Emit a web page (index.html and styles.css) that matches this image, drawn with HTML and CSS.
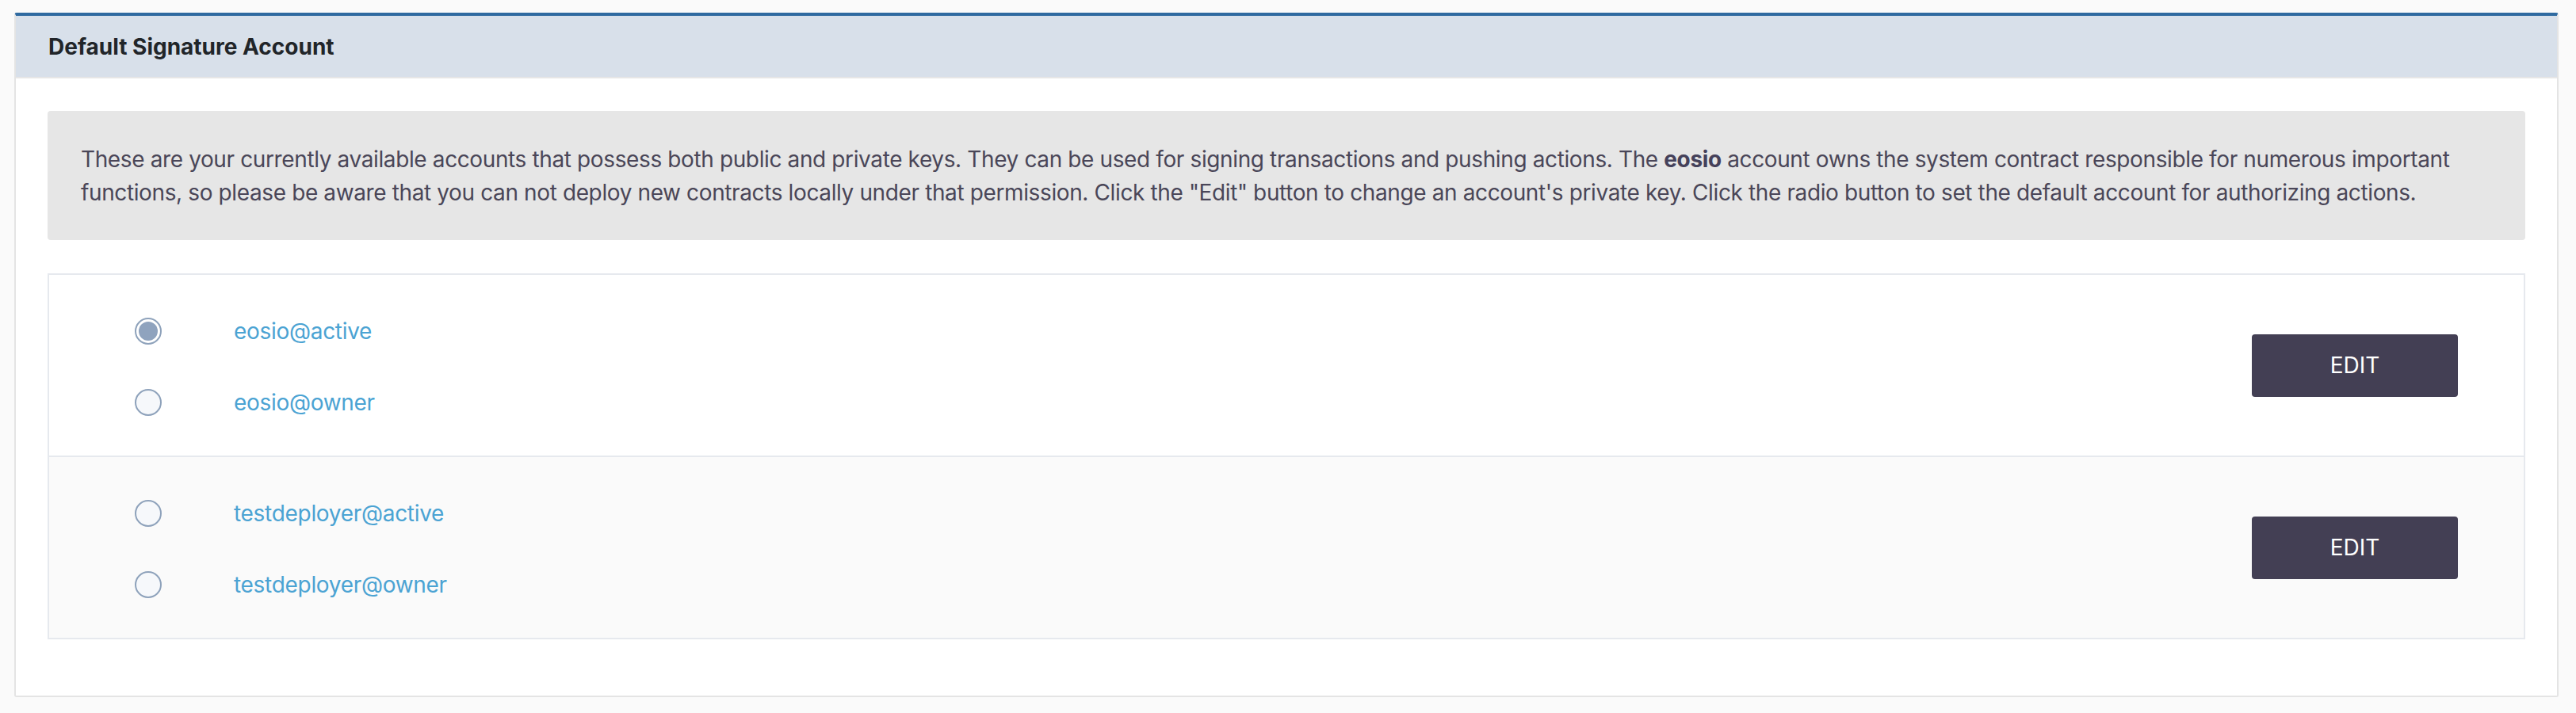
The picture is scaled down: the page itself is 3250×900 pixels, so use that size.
FILE: index.html
```html
<!DOCTYPE html>
<html lang="en">
<head>
<meta charset="utf-8">
<title>Default Signature Account</title>
<link rel="stylesheet" href="styles.css">
</head>
<body>
  <section class="card">
    <header class="card-header">Default Signature Account</header>
    <div class="card-body">
      <div class="info">
        These are your currently available accounts that possess both public and private keys. They can be used for signing transactions and pushing actions. The <b>eosio</b> account owns the system contract responsible for numerous important functions, so please be aware that you can not deploy new contracts locally under that permission. Click the "Edit" button to change an account's private key. Click the radio button to set the default account for authorizing actions.
      </div>
      <div class="accounts">
        <div class="account-row">
          <div class="options">
            <label class="option"><span class="radio checked"></span><span class="name">eosio@active</span></label>
            <label class="option"><span class="radio"></span><span class="name">eosio@owner</span></label>
          </div>
          <button class="edit-btn">EDIT</button>
        </div>
        <div class="account-row alt">
          <div class="options">
            <label class="option"><span class="radio"></span><span class="name">testdeployer@active</span></label>
            <label class="option"><span class="radio"></span><span class="name">testdeployer@owner</span></label>
          </div>
          <button class="edit-btn">EDIT</button>
        </div>
      </div>
    </div>
  </section>
</body>
</html>
```
FILE: styles.css
```css
html, body {
  margin: 0;
  background: #fafafa;
}
body {
  padding: 16px 22px 0 18px;
  font-family: Inter, "Liberation Sans", sans-serif;
}
.card {
  background: #ffffff;
  border: 2px solid #e4e4e4;
  border-top: 4px solid #2f6aa0;
  border-radius: 3px;
}
.card-header {
  background: #d8e0ea;
  border-bottom: 2px solid #e6e6e6;
  height: 77px;
  display: flex;
  align-items: center;
  padding-left: 41px;
  font-size: 28px;
  font-weight: 700;
  color: #212529;
}
.card-body {
  padding: 41px 40px 40px;
}
.info {
  background: #e6e6e6;
  border-radius: 4px;
  padding: 40px 42px 39px;
  font-size: 28px;
  line-height: 42px;
  letter-spacing: -0.38px;
  color: #4a4658;
}
.info b {
  font-weight: 700;
  color: #45415a;
}
.accounts {
  margin-top: 42px;
  margin-bottom: 31px;
  border: 2px solid #e6e9ee;
}
.account-row {
  display: flex;
  align-items: center;
  justify-content: space-between;
  padding: 50px 83px 46px 108px;
  background: #ffffff;
}
.account-row.alt {
  background: #fafafa;
  border-top: 2px solid #e6e9ee;
}
.options {
  display: flex;
  flex-direction: column;
  gap: 48px;
}
.option {
  display: flex;
  align-items: center;
  height: 42px;
}
.radio {
  width: 34px;
  height: 34px;
  box-sizing: border-box;
  border: 2px solid #8ea2bb;
  border-radius: 50%;
  background: #f6f8fb;
  margin-right: 91px;
  display: flex;
  align-items: center;
  justify-content: center;
}
.radio.checked {
  background: #ffffff;
}
.radio.checked::after {
  content: "";
  width: 24px;
  height: 24px;
  border-radius: 50%;
  background: #8fa3be;
}
.name {
  font-size: 28px;
  letter-spacing: -0.3px;
  color: #4ba3d3;
}
.edit-btn {
  width: 260px;
  height: 79px;
  margin-bottom: 4px;
  background: #433f54;
  color: #ffffff;
  border: none;
  border-radius: 4px;
  font-family: Inter, "Liberation Sans", sans-serif;
  font-size: 28px;
  font-weight: 400;
}
```
